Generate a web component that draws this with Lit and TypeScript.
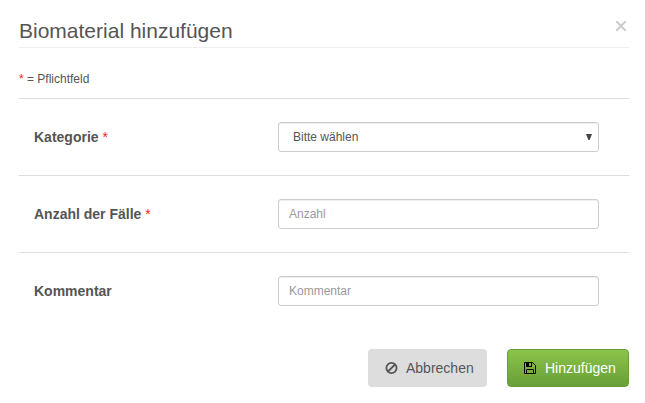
import { LitElement, html, css } from "lit";
import { customElement, property } from "lit/decorators.js";

@customElement("form-row")
class FormRow extends LitElement {
  @property() label = "";
  @property({ type: Boolean }) required = false;
  static styles = css`
    :host { display: block; box-sizing: border-box; height: 77px; border-top: 1px solid #ddd; }
    .row { display: grid; grid-template-columns: 244px 321px; padding: 23px 15px 0; align-items: center; }
    .label { font-weight: bold; font-size: 14px; color: #555; }
    .star { font-weight: normal; color: #ff2020; }
  `;
  render() {
    return html`<div class="row">
      <span class="label">${this.label} ${this.required ? html`<span class="star">*</span>` : ""}</span>
      <slot></slot>
    </div>`;
  }
}

@customElement("app-root")
class AppRoot extends LitElement {
  static styles = css`
    :host { display: block; box-sizing: border-box; width: 645px; height: 403px; padding: 16px 16px 0 19px; background: #fff; color: #555; font-family: "Liberation Sans", Arial, sans-serif; font-size: 12px; }
    .head { display: flex; justify-content: space-between; box-sizing: border-box; width: 610px; height: 32px; border-bottom: 1px solid #eee; }
    .title { font-size: 21px; line-height: 30px; }
    .close { width: 12px; height: 12px; margin: 4px 2px 0 0; }
    .note { height: 50px; line-height: 62px; }
    .star { color: #ff2020; }
    .rows { width: 610px; }
    .field { box-sizing: border-box; height: 30px; border: 1px solid #ccc; border-radius: 3px; box-shadow: inset 0 1px 1px rgba(0, 0, 0, 0.075); padding: 0 10px; line-height: 28px; color: #999; }
    .select { display: flex; justify-content: space-between; align-items: center; color: #555; padding: 0 6px 0 14px; }
    .actions { display: flex; justify-content: flex-end; gap: 20px; width: 610px; margin-top: 20px; }
    .button { display: flex; align-items: center; box-sizing: border-box; height: 38px; border-radius: 4px; font-size: 14px; }
    .button svg { display: block; }
    .cancel { width: 119px; background: #ddd; padding-left: 17px; gap: 8px; }
    .add { width: 122px; padding-left: 16px; gap: 9px; color: #fff; border: 1px solid #689f38; background: linear-gradient(#8bc34a, #689f38); }
  `;
  render() {
    return html`
      <div class="head">
        <div class="title">Biomaterial hinzufügen</div>
        <svg class="close" viewBox="0 0 12 12"><path d="M1.3 1.3l9.4 9.4M10.7 1.3l-9.4 9.4" stroke="#ccc" stroke-width="2" /></svg>
      </div>
      <div class="note"><span class="star">*</span> = Pflichtfeld</div>
      <div class="rows">
        <form-row label="Kategorie" required>
          <div class="field select"><span>Bitte wählen</span><svg width="6" height="6"><path d="M0 0h6L3.6 6H2.4z" fill="#444" /></svg></div>
        </form-row>
        <form-row label="Anzahl der Fälle" required><div class="field">Anzahl</div></form-row>
        <form-row label="Kommentar"><div class="field">Kommentar</div></form-row>
      </div>
      <div class="actions">
        <div class="button cancel"><svg width="13" height="12"><circle cx="6.5" cy="6" r="5.1" fill="none" stroke="#555" stroke-width="1.8" /><path d="M3 9.5l7-7" stroke="#555" stroke-width="1.8" /></svg>Abbrechen</div>
        <div class="button add"><svg width="12" height="12"><path d="M.5 .5h8l3 3v8H.5zM2.5 11V7.5h7V11" fill="none" stroke="#000" /><path fill-rule="evenodd" d="M2 0h6v5H2zM5 1h2v3H5z" fill="#000" /></svg>Hinzufügen</div>
      </div>`;
  }
}
